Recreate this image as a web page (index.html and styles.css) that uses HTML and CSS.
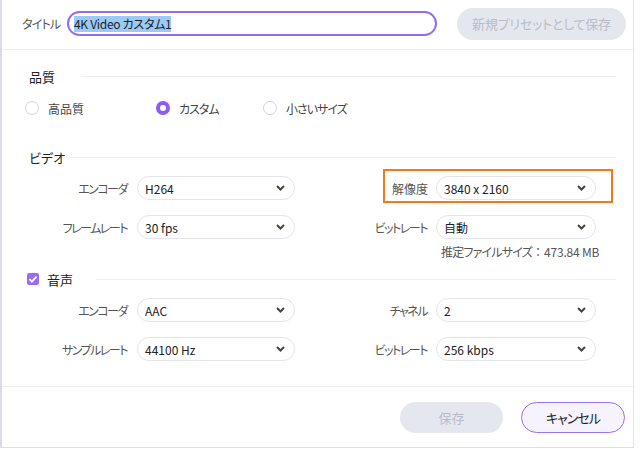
FILE: index.html
```html
<!DOCTYPE html>
<html lang="ja">
<head>
<meta charset="utf-8">
<link rel="stylesheet" href="styles.css">
</head>
<body>
<div class="window">
  <header class="top">
    <span class="title-label">タイトル</span>
    <div class="title-input"><span class="selected">4K Video カスタム1</span></div>
    <button class="btn btn-disabled btn-preset">新規プリセットとして保存</button>
  </header>
  <main class="panel">
    <div class="section-head head-quality"><span>品質</span><span class="rule"></span></div>
    <div class="radios">
      <div class="radio-item item-1"><span class="radio"></span><span class="kanji">高品質</span></div>
      <div class="radio-item item-2"><span class="radio radio-on"></span><span>カスタム</span></div>
      <div class="radio-item"><span class="radio"></span><span>小さいサイズ</span></div>
    </div>
    <div class="section-head head-video"><span>ビデオ</span><span class="rule"></span></div>
    <div class="form form-video">
      <span class="lbl">エンコーダ</span>
      <div class="select"><span>H264</span><svg width="9" height="6" viewBox="0 0 9 6"><path d="M1 1l3.5 3.5L8 1" stroke="#444" stroke-width="2" fill="none"/></svg></div>
      <span class="lbl lbl-r kanji">解像度</span>
      <div class="select highlight"><span>3840 x 2160</span><svg width="9" height="6" viewBox="0 0 9 6"><path d="M1 1l3.5 3.5L8 1" stroke="#444" stroke-width="2" fill="none"/></svg></div>
      <span class="lbl">フレームレート</span>
      <div class="select"><span>30 fps</span><svg width="9" height="6" viewBox="0 0 9 6"><path d="M1 1l3.5 3.5L8 1" stroke="#444" stroke-width="2" fill="none"/></svg></div>
      <span class="lbl lbl-r">ビットレート</span>
      <div class="select"><span>自動</span><svg width="9" height="6" viewBox="0 0 9 6"><path d="M1 1l3.5 3.5L8 1" stroke="#444" stroke-width="2" fill="none"/></svg></div>
    </div>
    <div class="estimate">推定ファイルサイズ<span class="colon">：</span><span class="num">473.84 MB</span></div>
    <div class="section-head head-audio">
      <span class="check"><svg width="12" height="12" viewBox="0 0 12 12"><path d="M2.5 6.2l2.4 2.4 4.6-5" stroke="#fff" stroke-width="1.8" fill="none"/></svg></span>
      <span>音声</span><span class="rule"></span>
    </div>
    <div class="form form-audio">
      <span class="lbl">エンコーダ</span>
      <div class="select"><span>AAC</span><svg width="9" height="6" viewBox="0 0 9 6"><path d="M1 1l3.5 3.5L8 1" stroke="#444" stroke-width="2" fill="none"/></svg></div>
      <span class="lbl lbl-r">チャネル</span>
      <div class="select"><span>2</span><svg width="9" height="6" viewBox="0 0 9 6"><path d="M1 1l3.5 3.5L8 1" stroke="#444" stroke-width="2" fill="none"/></svg></div>
      <span class="lbl">サンプルレート</span>
      <div class="select"><span>44100 Hz</span><svg width="9" height="6" viewBox="0 0 9 6"><path d="M1 1l3.5 3.5L8 1" stroke="#444" stroke-width="2" fill="none"/></svg></div>
      <span class="lbl lbl-r">ビットレート</span>
      <div class="select"><span>256 kbps</span><svg width="9" height="6" viewBox="0 0 9 6"><path d="M1 1l3.5 3.5L8 1" stroke="#444" stroke-width="2" fill="none"/></svg></div>
    </div>
  </main>
  <footer class="bottom">
    <button class="btn btn-disabled btn-save">保存</button>
    <button class="btn btn-cancel">キャンセル</button>
  </footer>
</div>
</body>
</html>
```

FILE: styles.css
```css
* { box-sizing: border-box; }
html, body { margin: 0; padding: 0; background: #fff; }
body {
  font-family: "Noto Sans CJK JP", "Noto Sans", sans-serif;
  font-feature-settings: "palt";
  font-size: 12px;
  color: #333;
}
.window {
  width: 634px;
  height: 448px;
  border-left: 2px solid #dcd9e8;
  border-right: 1px solid #e4e4ea;
  border-bottom: 1px solid #dedee4;
  display: flex;
  flex-direction: column;
}
.top {
  height: 50px;
  border-bottom: 1px solid #ececf0;
  display: flex;
  align-items: center;
  padding: 4px 6px 6px 20px;
}
.title-label { color: #555; font-size: 12px; width: 45px; letter-spacing: -0.8px; }
.title-input {
  width: 370px;
  height: 25px;
  border: 2px solid #946af2;
  border-radius: 13px;
  padding-left: 5px;
  display: flex;
  align-items: center;
  font-size: 12px;
  color: #222;
}
.selected { background: #9ccaf6; line-height: 16px; letter-spacing: -0.3px; }
.btn {
  font-family: inherit;
  font-feature-settings: "palt";
  font-size: 13px;
  border-radius: 16px;
  border: none;
  height: 31px;
  padding: 0;
  cursor: default;
}
.btn-disabled { background: #e5e7ef; color: #b9bcc8; }
.btn-preset { width: 169px; height: 32px; margin-left: 20px; letter-spacing: -0.2px; }
.panel {
  height: 336px;
  padding: 16px 17px 0 25px;
}
.section-head {
  height: 20px;
  display: flex;
  align-items: center;
  font-size: 13px;
  color: #222;
  padding-left: 2px;
}
.rule { flex: 1; height: 1px; background: #eeeef2; }
.head-quality .rule { margin-left: 27px; }
.head-video { margin-top: 29px; }
.head-video .rule { margin-left: 6px; }
.head-audio { margin-top: 9px; padding-left: 0; }
.head-audio .rule { margin-left: 23px; }
.check {
  width: 12px;
  height: 12px;
  background: #9a6bf3;
  border-radius: 2px;
  display: flex;
  margin-right: 8px;
}
.radios {
  margin-top: 12px;
  margin-left: -2px;
  height: 20px;
  display: flex;
  align-items: center;
  font-size: 12px;
  color: #444;
  letter-spacing: -1px;
}
.radio-item { display: flex; align-items: center; gap: 9px; }
.item-1 { width: 131px; }
.item-2 { width: 107px; }
.radio {
  width: 14px;
  height: 14px;
  border-radius: 50%;
  border: 1px solid #d2d2da;
  background: #fff;
}
.radio-on { border: 4.5px solid #8c5cf4; }
.form {
  display: grid;
  grid-template-columns: 110px 158px 141px 160px;
  grid-auto-rows: 24px;
  row-gap: 15px;
  margin-top: 9px;
}
.lbl {
  text-align: right;
  padding-right: 10px;
  color: #555;
  align-self: center;
  font-size: 12px;
  letter-spacing: -1.5px;
}
.lbl-r { padding-right: 9px; }
.radios .kanji, .lbl.kanji { letter-spacing: 0; }
.lbl.kanji { padding-right: 8px; }
.select {
  position: relative;
  border: 1px solid #e4e4ea;
  border-radius: 12px;
  background: #fff;
  display: flex;
  align-items: center;
  justify-content: space-between;
  padding: 0 9px 0 7px;
  color: #222;
  font-size: 12px;
}
.highlight::after {
  content: "";
  position: absolute;
  top: -8px;
  bottom: -4px;
  left: -54px;
  right: -18px;
  border: 2px solid #f27a1d;
}
.estimate {
  margin-top: 5px;
  padding-left: 414px;
  line-height: 16px;
  color: #555;
  font-size: 12px;
  letter-spacing: -0.8px;
}
.colon { font-feature-settings: normal; letter-spacing: 0; }
.num { letter-spacing: -0.2px; }
.bottom {
  flex: 1;
  border-top: 1px solid #ececf0;
  display: flex;
  justify-content: flex-end;
  align-items: flex-start;
  gap: 18px;
  padding: 15px 8px 0 0;
}
.btn-save { width: 103px; }
.btn-cancel {
  width: 104px;
  background: #f6f3ff;
  border: 1.5px solid #9a70f2;
  color: #222;
  letter-spacing: -1px;
}
```
